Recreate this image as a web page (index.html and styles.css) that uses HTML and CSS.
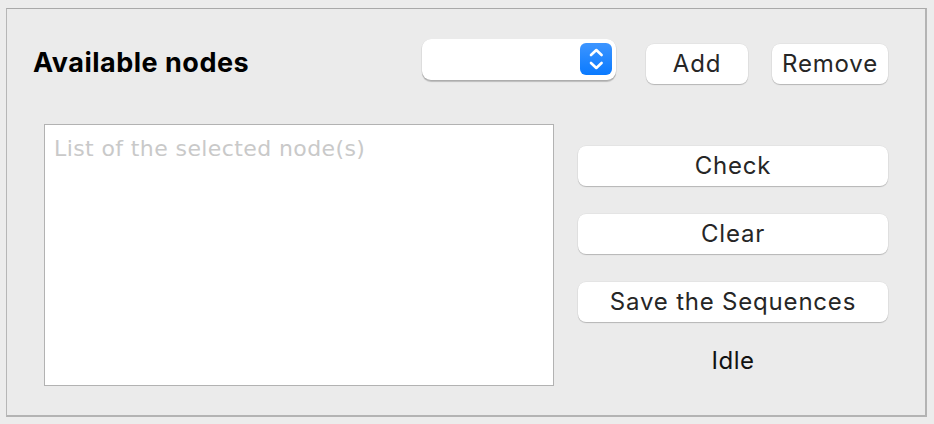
FILE: index.html
```html
<!DOCTYPE html>
<html>
<head>
<meta charset="utf-8">
<link rel="stylesheet" href="styles.css">
</head>
<body>
<div class="panel">
  <div class="header">
    <div class="title">Available nodes</div>
    <div class="popup">
      <div class="stepper">
        <svg width="32" height="32" viewBox="0 0 32 32"><path d="M11 12 L16.3 7 L21.6 12 M11 20 L16.3 25 L21.6 20" fill="none" stroke="#fff" stroke-width="2.6" stroke-linecap="round" stroke-linejoin="round"/></svg>
      </div>
    </div>
    <div class="btn add">Add</div>
    <div class="btn remove">Remove</div>
  </div>
  <div class="body">
    <div class="list"><span class="placeholder">List of the selected node(s)</span></div>
    <div class="side">
      <div class="buttons">
        <div class="btn wide">Check</div>
        <div class="btn wide">Clear</div>
        <div class="btn wide">Save the Sequences</div>
      </div>
      <div class="idle">Idle</div>
    </div>
  </div>
</div>
</body>
</html>
```
FILE: styles.css
```css
html, body {
  margin: 0;
  padding: 0;
  background: #ececec;
}
body {
  font-family: Inter, "Liberation Sans", sans-serif;
  width: 934px;
  height: 424px;
  overflow: hidden;
}
.panel {
  margin: 8px 0 0 6px;
  width: 921px;
  height: 409px;
  box-sizing: border-box;
  border-style: solid;
  border-width: 1px 2px 2px 1px;
  border-color: #a9a9a9 #b3b3b3 #b3b3b3 #b6b6b6;
  background: #ebebeb;
}
.header {
  display: flex;
  align-items: flex-start;
  height: 115px;
  padding-left: 26px;
}
.title {
  margin-top: 38px;
  font-size: 27px;
  line-height: 32px;
  font-weight: 700;
  letter-spacing: 0.5px;
  color: #000;
}
.popup {
  margin-left: auto;
  margin-top: 30px;
  width: 194px;
  height: 41px;
  box-sizing: border-box;
  background: #fff;
  border-radius: 9px;
  box-shadow: 0 0.5px 0 0.5px rgba(0,0,0,0.08), 0 1.5px 1px rgba(0,0,0,0.2);
  display: flex;
  justify-content: flex-end;
  padding: 4px;
}
.stepper {
  width: 32px;
  height: 32px;
  border-radius: 6px;
  background: linear-gradient(#3d95ff, #0a7aff);
}
.stepper svg {
  display: block;
}
.btn {
  height: 40px;
  box-sizing: border-box;
  background: #fff;
  border-radius: 8px;
  box-shadow: 0 0 0 0.5px rgba(0,0,0,0.06), 0 1px 1px rgba(0,0,0,0.2);
  font-size: 24px;
  line-height: 40px;
  letter-spacing: 0.8px;
  text-align: center;
  color: #262626;
}
.add {
  margin-top: 35px;
  margin-left: 30px;
  width: 102px;
}
.remove {
  margin-top: 35px;
  margin-left: 24px;
  margin-right: 37px;
  width: 116px;
}
.body {
  display: flex;
  padding-left: 37px;
  gap: 24px;
}
.list {
  width: 510px;
  height: 262px;
  box-sizing: border-box;
  background: #fff;
  border: 1px solid #b2b2b2;
  padding: 12px 9px;
}
.placeholder {
  font-family: "DejaVu Sans", sans-serif;
  font-size: 22px;
  line-height: 24px;
  letter-spacing: 0.4px;
  color: #c9c9c9;
}
.side {
  width: 310px;
  padding-top: 22px;
  display: flex;
  flex-direction: column;
}
.buttons {
  display: flex;
  flex-direction: column;
  gap: 28px;
}
.idle {
  margin-top: 19px;
  font-size: 24px;
  line-height: 40px;
  letter-spacing: 0.5px;
  text-align: center;
  color: #111;
}
```
